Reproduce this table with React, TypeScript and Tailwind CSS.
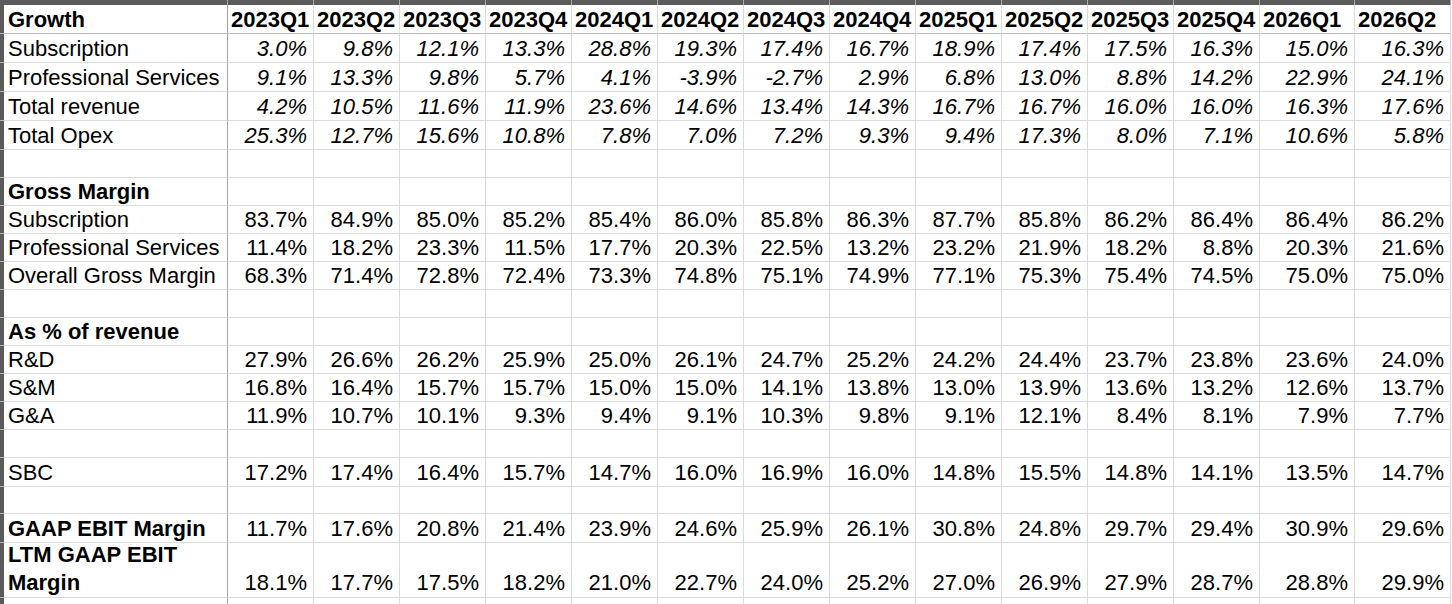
import React from 'react'

type Row = {
  label?: string
  bold?: boolean
  italic?: boolean
  values?: number[]
  h: string
  wrap?: boolean
}

const quarters = [
  '2023Q1', '2023Q2', '2023Q3', '2023Q4',
  '2024Q1', '2024Q2', '2024Q3', '2024Q4',
  '2025Q1', '2025Q2', '2025Q3', '2025Q4',
  '2026Q1', '2026Q2',
]

// column widths incl. right gridline
const colW = [
  'w-[86px]', 'w-[86px]', 'w-[86px]', 'w-[86px]',
  'w-[86px]', 'w-[86px]', 'w-[86px]', 'w-[86px]',
  'w-[86px]', 'w-[86px]', 'w-[86px]', 'w-[86px]',
  'w-[95px]', 'w-[96px]',
]

const rows: Row[] = [
  { label: 'Subscription', italic: true, h: 'h-[29px]', values: [3.0, 9.8, 12.1, 13.3, 28.8, 19.3, 17.4, 16.7, 18.9, 17.4, 17.5, 16.3, 15.0, 16.3] },
  { label: 'Professional Services', italic: true, h: 'h-[29px]', values: [9.1, 13.3, 9.8, 5.7, 4.1, -3.9, -2.7, 2.9, 6.8, 13.0, 8.8, 14.2, 22.9, 24.1] },
  { label: 'Total revenue', italic: true, h: 'h-[29px]', values: [4.2, 10.5, 11.6, 11.9, 23.6, 14.6, 13.4, 14.3, 16.7, 16.7, 16.0, 16.0, 16.3, 17.6] },
  { label: 'Total Opex', italic: true, h: 'h-[29px]', values: [25.3, 12.7, 15.6, 10.8, 7.8, 7.0, 7.2, 9.3, 9.4, 17.3, 8.0, 7.1, 10.6, 5.8] },
  { h: 'h-[28px]' },
  { label: 'Gross Margin', bold: true, h: 'h-[28px]' },
  { label: 'Subscription', h: 'h-[28px]', values: [83.7, 84.9, 85.0, 85.2, 85.4, 86.0, 85.8, 86.3, 87.7, 85.8, 86.2, 86.4, 86.4, 86.2] },
  { label: 'Professional Services', h: 'h-[28px]', values: [11.4, 18.2, 23.3, 11.5, 17.7, 20.3, 22.5, 13.2, 23.2, 21.9, 18.2, 8.8, 20.3, 21.6] },
  { label: 'Overall Gross Margin', h: 'h-[28px]', values: [68.3, 71.4, 72.8, 72.4, 73.3, 74.8, 75.1, 74.9, 77.1, 75.3, 75.4, 74.5, 75.0, 75.0] },
  { h: 'h-[28px]' },
  { label: 'As % of revenue', bold: true, h: 'h-[28px]' },
  { label: 'R&D', h: 'h-[28px]', values: [27.9, 26.6, 26.2, 25.9, 25.0, 26.1, 24.7, 25.2, 24.2, 24.4, 23.7, 23.8, 23.6, 24.0] },
  { label: 'S&M', h: 'h-[28px]', values: [16.8, 16.4, 15.7, 15.7, 15.0, 15.0, 14.1, 13.8, 13.0, 13.9, 13.6, 13.2, 12.6, 13.7] },
  { label: 'G&A', h: 'h-[28px]', values: [11.9, 10.7, 10.1, 9.3, 9.4, 9.1, 10.3, 9.8, 9.1, 12.1, 8.4, 8.1, 7.9, 7.7] },
  { h: 'h-[28px]' },
  { label: 'SBC', h: 'h-[29px]', values: [17.2, 17.4, 16.4, 15.7, 14.7, 16.0, 16.9, 16.0, 14.8, 15.5, 14.8, 14.1, 13.5, 14.7] },
  { h: 'h-[27px]' },
  { label: 'GAAP EBIT Margin', bold: true, h: 'h-[29px]', values: [11.7, 17.6, 20.8, 21.4, 23.9, 24.6, 25.9, 26.1, 30.8, 24.8, 29.7, 29.4, 30.9, 29.6] },
  { label: 'LTM GAAP EBIT Margin', bold: true, wrap: true, h: 'h-[55px]', values: [18.1, 17.7, 17.5, 18.2, 21.0, 22.7, 24.0, 25.2, 27.0, 26.9, 27.9, 28.7, 28.8, 29.9] },
  { h: 'h-[28px]' },
]

function RowHeader({ last }: { last?: boolean }) {
  return (
    <div className={`w-[4px] shrink-0 bg-[#5b5b5b] ${last ? '' : 'border-b border-[#b4b4b4]'}`} />
  )
}

function DataRow({ row }: { row: Row }) {
  const lead = row.wrap ? 'leading-[28px] pb-0' : 'leading-[24px] pb-[1px]'
  return (
    <div className={`flex ${row.h} shrink-0`}>
      <RowHeader />
      <div
        className={`w-[224px] shrink-0 flex items-end pl-[4px] border-r border-b border-r-[#a3a3a3] border-b-[#dcdcdc] ${lead} ${
          row.bold ? 'font-bold' : ''
        } ${row.wrap ? '' : 'whitespace-nowrap'}`}
      >
        {row.wrap ? (
          <span>
            LTM GAAP EBIT
            <br />
            Margin
          </span>
        ) : (
          <span>{row.label}</span>
        )}
      </div>
      {colW.map((w, i) => {
        const v = row.values?.[i]
        return (
          <div
            key={i}
            className={`${w} shrink-0 flex items-end justify-end pr-[6px] border-r border-b border-[#dcdcdc] ${lead} ${
              row.italic ? 'italic' : ''
            }`}
          >
            {v !== undefined && <span>{v.toFixed(1)}%</span>}
          </div>
        )
      })}
    </div>
  )
}

export default function App() {
  return (
    <div className="h-screen w-full overflow-hidden bg-white text-black font-['Liberation_Sans',Arial,sans-serif] text-[22px]">
      {/* column header strip */}
      <div className="flex h-[5px]">
        <div className="w-[4px] shrink-0 bg-[#5b5b5b]" />
        <div className="w-[224px] shrink-0 bg-[#5b5b5b] border-r border-[#a8a8a8]" />
        {colW.map((w, i) => (
          <div key={i} className={`${w} shrink-0 bg-[#5b5b5b] border-r border-[#a8a8a8]`} />
        ))}
      </div>

      {/* header row */}
      <div className="flex h-[29px]">
        <RowHeader />
        <div className="w-[224px] shrink-0 flex items-end pl-[4px] pb-[1px] leading-[24px] font-bold border-r border-b border-r-[#a3a3a3] border-b-[#bcbcbc]">
          Growth
        </div>
        {quarters.map((q, i) => (
          <div
            key={q}
            className={`${colW[i]} shrink-0 flex items-end pl-[3px] pb-[1px] leading-[24px] font-bold whitespace-nowrap border-r border-r-[#dcdcdc] border-b border-b-[#bcbcbc]`}
          >
            {q}
          </div>
        ))}
      </div>

      {rows.map((row, i) => (
        <DataRow key={i} row={row} />
      ))}
    </div>
  )
}
